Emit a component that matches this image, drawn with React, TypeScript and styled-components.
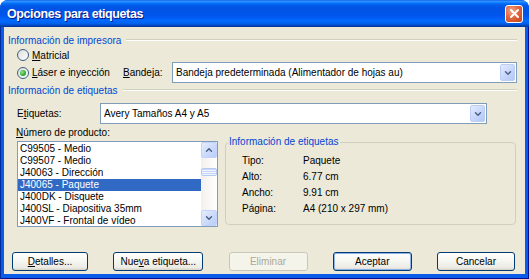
import { Fragment } from "react";
import styled, { createGlobalStyle } from "styled-components";
import { ChevronDown, ChevronUp } from "lucide-react";

const GlobalStyle = createGlobalStyle`
	html, body {
		margin: 0;
		padding: 0;
		background: #ffffff;
	}
	body {
		font-family: "Liberation Sans", Arial, sans-serif;
		font-size: 10px;
		color: #000000;
	}
	* {
		box-sizing: border-box;
	}
`;

const Window = styled.div`
	width: 529px;
	height: 279px;
	display: flex;
	flex-direction: column;
	border-radius: 8px 8px 0 0;
	overflow: hidden;
	background: #0054e3;
`;

const TitleBar = styled.div`
	height: 27px;
	flex: none;
	display: flex;
	align-items: center;
	justify-content: space-between;
	padding: 0 6px 0 7px;
	background: linear-gradient(
		180deg,
		#0058ee 0%,
		#3593ff 4%,
		#288eff 7%,
		#127dff 10%,
		#036ffc 13%,
		#0262ee 17%,
		#0057e5 24%,
		#0054e3 30%,
		#0055eb 56%,
		#005bf5 66%,
		#026afe 76%,
		#0062ef 86%,
		#0052d6 92%,
		#0040ab 96%,
		#003092 100%
	);
`;

const Title = styled.span`
	font-family: "Liberation Sans", Arial, sans-serif;
	font-weight: bold;
	font-size: 12.5px;
	letter-spacing: -0.4px;
	color: #ffffff;
	text-shadow: 1px 1px 0 #0a1883;
`;

const CloseButton = styled.div`
	width: 18px;
	height: 18px;
	border: 1px solid #ffffff;
	border-radius: 3px;
	display: flex;
	align-items: center;
	justify-content: center;
	background: radial-gradient(circle at 35% 30%, #f2a488 0%, #e2673f 45%, #c4411c 100%);
`;

const Frame = styled.div`
	flex: 1;
	display: flex;
	padding: 0 5px 5px 4px;
	background: #0a5be8;
	box-shadow: inset 1px 0 #002b9c, inset -1px 0 #00138c, inset 0 -1px #00138c;
`;

const Body = styled.div`
	flex: 1;
	display: flex;
	flex-direction: column;
	padding: 7px 8px 0 4px;
	background: #ece9d8;
`;

const SectionHeader = styled.div<{ $gap: number }>`
	display: flex;
	align-items: center;
	gap: 5px;
	height: 12px;
	margin-top: ${(p) => p.$gap}px;
	color: #0046d5;
	white-space: nowrap;
	&::after {
		content: "";
		flex: 1;
		border-top: 1px solid #d0d0bf;
		border-bottom: 1px solid #ffffff;
	}
`;

const Row = styled.div<{ $gap: number; $h: number }>`
	display: flex;
	align-items: center;
	height: ${(p) => p.$h}px;
	margin-top: ${(p) => p.$gap}px;
	padding-left: 9px;
`;

const RadioOption = styled.label<{ $w?: number }>`
	display: flex;
	align-items: center;
	gap: 3px;
	width: ${(p) => (p.$w ? `${p.$w}px` : "auto")};
	white-space: nowrap;
`;

const RadioCircle = styled.span<{ $checked?: boolean }>`
	width: 12px;
	height: 12px;
	border-radius: 50%;
	border: 1px solid #3a5f84;
	background: linear-gradient(135deg, #dcdcd7 0%, #ffffff 100%);
	display: flex;
	align-items: center;
	justify-content: center;
	&::after {
		content: "";
		width: 6px;
		height: 6px;
		border-radius: 50%;
		background: ${(p) =>
			p.$checked ? "radial-gradient(circle at 35% 35%, #8ee58e 0%, #21a121 70%)" : "transparent"};
	}
`;

const FieldLabel = styled.span<{ $w: number }>`
	width: ${(p) => p.$w}px;
	white-space: nowrap;
`;

const Combo = styled.div<{ $w: number }>`
	width: ${(p) => p.$w}px;
	height: 100%;
	display: flex;
	align-items: center;
	border: 1px solid #7f9db9;
	background: #ffffff;
	padding: 1px 1px 1px 3px;
`;

const ComboText = styled.span`
	flex: 1;
	white-space: nowrap;
	overflow: hidden;
`;

const ArrowButton = styled.span`
	width: 15px;
	height: 100%;
	display: flex;
	align-items: center;
	justify-content: center;
	border: 1px solid #bccdf5;
	border-radius: 2px;
	background: linear-gradient(135deg, #e3ebfd 0%, #c6d6fb 55%, #b2c8f7 100%);
	color: #4d6185;
`;

const ProductArea = styled.div`
	display: flex;
	align-items: flex-start;
	gap: 7px;
	margin-top: 3px;
`;

const LeftColumn = styled.div`
	display: flex;
	flex-direction: column;
	gap: 2px;
	padding-left: 9px;
`;

const PlainLabel = styled.div`
	height: 12px;
	line-height: 12px;
	margin-left: -1px;
`;

const ProductList = styled.div`
	width: 201px;
	height: 86px;
	display: flex;
	border: 1px solid #7f9db9;
	background: #ffffff;
`;

const Items = styled.ul`
	flex: 1;
	margin: 0;
	padding: 1px 0 0 0;
	list-style: none;
	overflow: hidden;
`;

const Item = styled.li<{ $selected?: boolean }>`
	height: 12px;
	line-height: 12px;
	padding-left: 2px;
	white-space: nowrap;
	background: ${(p) => (p.$selected ? "#316ac5" : "transparent")};
	color: ${(p) => (p.$selected ? "#ffffff" : "#000000")};
`;

const ScrollBar = styled.div`
	width: 16px;
	display: flex;
	flex-direction: column;
	background: linear-gradient(90deg, #f3f1ec 0%, #fefefe 100%);
`;

const ScrollButton = styled.span`
	height: 16px;
	flex: none;
	display: flex;
	align-items: center;
	justify-content: center;
	border: 1px solid #c3d3fd;
	border-radius: 2px;
	background: linear-gradient(135deg, #e6eefc 0%, #c9d9fb 60%, #b9cdf8 100%);
	color: #4d6185;
`;

const ScrollTrack = styled.span`
	flex: 1;
	display: flex;
	flex-direction: column;
	padding-top: 10px;
`;

const ScrollThumb = styled.span`
	height: 8px;
	border: 1px solid #b6c9f3;
	border-radius: 2px;
	background: repeating-linear-gradient(180deg, #c8d7fb 0 1px, #eef3fe 1px 2px);
`;

const InfoBox = styled.fieldset`
	width: 291px;
	height: 89px;
	margin: 9px 0 0 0;
	padding: 0 0 0 2px;
	min-width: 0;
	border: 1px solid #d0d0bf;
	border-radius: 4px;
`;

const InfoLegend = styled.legend`
	padding: 0 1px;
	line-height: 12px;
	color: #0046d5;
`;

const InfoGrid = styled.div`
	display: grid;
	grid-template-columns: 61px 1fr;
	grid-auto-rows: 16px;
	align-items: center;
	margin: 4px 0 0 14px;
`;

const ButtonRow = styled.div`
	display: flex;
	justify-content: space-between;
	margin-top: 25px;
	padding: 0 2px 0 4px;
`;

const DialogButton = styled.button<{ $w: number; $default?: boolean }>`
	width: ${(p) => p.$w}px;
	height: 19px;
	padding: 0;
	font-family: inherit;
	font-size: 10px;
	color: #000000;
	border: 1px solid #003c74;
	border-radius: 3px;
	background: linear-gradient(180deg, #ffffff 0%, #f6f6f2 45%, #ecebe5 85%, #d8d2c6 100%);
	box-shadow: ${(p) => (p.$default ? "inset 0 0 0 1px #8fb2e8" : "none")};
	&:disabled {
		border-color: #c9c7ba;
		color: #aca899;
		background: #f5f4ea;
	}
`;

const products = [
	"C99505 - Medio",
	"C99507 - Medio",
	"J40063 - Dirección",
	"J40065 - Paquete",
	"J400DK - Disquete",
	"J400SL - Diapositiva 35mm",
	"J400VF - Frontal de vídeo",
];

const details = [
	["Tipo:", "Paquete"],
	["Alto:", "6.77 cm"],
	["Ancho:", "9.91 cm"],
	["Página:", "A4 (210 x 297 mm)"],
];

function App() {
	return (
		<>
			<GlobalStyle />
			<Window>
				<TitleBar>
					<Title>Opciones para etiquetas</Title>
					<CloseButton>
						<svg width="11" height="11" viewBox="0 0 11 11">
							<path d="M2 2 L9 9 M9 2 L2 9" stroke="#ffffff" strokeWidth="2" strokeLinecap="round" />
						</svg>
					</CloseButton>
				</TitleBar>
				<Frame>
					<Body>
						<SectionHeader $gap={0}>Información de impresora</SectionHeader>
						<Row $gap={2} $h={14}>
							<RadioOption>
								<RadioCircle />
								<span>
									<u>M</u>atricial
								</span>
							</RadioOption>
						</Row>
						<Row $gap={0} $h={21}>
							<RadioOption $w={106}>
								<RadioCircle $checked />
								<span>
									<u>L</u>áser e inyección
								</span>
							</RadioOption>
							<FieldLabel $w={49}>
								<u>B</u>andeja:
							</FieldLabel>
							<Combo $w={345}>
								<ComboText>Bandeja predeterminada (Alimentador de hojas au)</ComboText>
								<ArrowButton>
									<ChevronDown size={10} strokeWidth={3.5} />
								</ArrowButton>
							</Combo>
						</Row>
						<SectionHeader $gap={1}>Información de etiquetas</SectionHeader>
						<Row $gap={7} $h={21}>
							<FieldLabel $w={83}>
								E<u>t</u>iquetas:
							</FieldLabel>
							<Combo $w={387}>
								<ComboText>Avery Tamaños A4 y A5</ComboText>
								<ArrowButton>
									<ChevronDown size={10} strokeWidth={3.5} />
								</ArrowButton>
							</Combo>
						</Row>
						<ProductArea>
							<LeftColumn>
								<PlainLabel>
									<u>N</u>úmero de producto:
								</PlainLabel>
								<ProductList>
									<Items>
										{products.map((p, i) => (
											<Item key={p} $selected={i === 3}>
												{p}
											</Item>
										))}
									</Items>
									<ScrollBar>
										<ScrollButton>
											<ChevronUp size={10} strokeWidth={3.5} />
										</ScrollButton>
										<ScrollTrack>
											<ScrollThumb />
										</ScrollTrack>
										<ScrollButton>
											<ChevronDown size={10} strokeWidth={3.5} />
										</ScrollButton>
									</ScrollBar>
								</ProductList>
							</LeftColumn>
							<InfoBox>
								<InfoLegend>Información de etiquetas</InfoLegend>
								<InfoGrid>
									{details.map(([k, v]) => (
										<Fragment key={k}>
											<span>{k}</span>
											<span>{v}</span>
										</Fragment>
									))}
								</InfoGrid>
							</InfoBox>
						</ProductArea>
						<ButtonRow>
							<DialogButton $w={76}>
								<u>D</u>etalles...
							</DialogButton>
							<DialogButton $w={90}>
								Nue<u>v</u>a etiqueta...
							</DialogButton>
							<DialogButton $w={79} disabled>
								Eliminar
							</DialogButton>
							<DialogButton $w={79} $default>
								Aceptar
							</DialogButton>
							<DialogButton $w={78}>Cancelar</DialogButton>
						</ButtonRow>
					</Body>
				</Frame>
			</Window>
		</>
	);
}

export default App;
